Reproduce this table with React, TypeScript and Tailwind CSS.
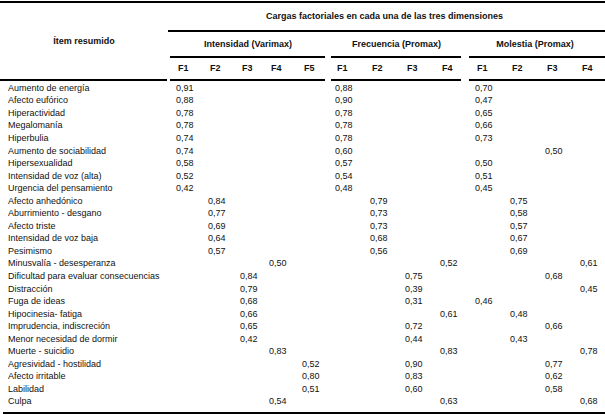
type Cell = [number, string]

interface Row {
  label: string
  cells: Cell[]
}

// column widths of the 13 factor columns (values are left aligned in each)
const colWidths = [32, 32, 29, 33, 33, 35, 35, 35, 35, 35, 35, 35, 25]

const rows: Row[] = [
  { label: 'Aumento de energía', cells: [[1, '0,91'], [6, '0,88'], [10, '0,70']] },
  { label: 'Afecto eufórico', cells: [[1, '0,88'], [6, '0,90'], [10, '0,47']] },
  { label: 'Hiperactividad', cells: [[1, '0,78'], [6, '0,78'], [10, '0,65']] },
  { label: 'Megalomanía', cells: [[1, '0,78'], [6, '0,78'], [10, '0,66']] },
  { label: 'Hiperbulia', cells: [[1, '0,74'], [6, '0,78'], [10, '0,73']] },
  { label: 'Aumento de sociabilidad', cells: [[1, '0,74'], [6, '0,60'], [12, '0,50']] },
  { label: 'Hipersexualidad', cells: [[1, '0,58'], [6, '0,57'], [10, '0,50']] },
  { label: 'Intensidad de voz (alta)', cells: [[1, '0,52'], [6, '0,54'], [10, '0,51']] },
  { label: 'Urgencia del pensamiento', cells: [[1, '0,42'], [6, '0,48'], [10, '0,45']] },
  { label: 'Afecto anhedónico', cells: [[2, '0,84'], [7, '0,79'], [11, '0,75']] },
  { label: 'Aburrimiento - desgano', cells: [[2, '0,77'], [7, '0,73'], [11, '0,58']] },
  { label: 'Afecto triste', cells: [[2, '0,69'], [7, '0,73'], [11, '0,57']] },
  { label: 'Intensidad de voz baja', cells: [[2, '0,64'], [7, '0,68'], [11, '0,67']] },
  { label: 'Pesimismo', cells: [[2, '0,57'], [7, '0,56'], [11, '0,69']] },
  { label: 'Minusvalía - desesperanza', cells: [[4, '0,50'], [9, '0,52'], [13, '0,61']] },
  { label: 'Dificultad para evaluar consecuencias', cells: [[3, '0,84'], [8, '0,75'], [12, '0,68']] },
  { label: 'Distracción', cells: [[3, '0,79'], [8, '0,39'], [13, '0,45']] },
  { label: 'Fuga de ideas', cells: [[3, '0,68'], [8, '0,31'], [10, '0,46']] },
  { label: 'Hipocinesia- fatiga', cells: [[3, '0,66'], [9, '0,61'], [11, '0,48']] },
  { label: 'Imprudencia, indiscreción', cells: [[3, '0,65'], [8, '0,72'], [12, '0,66']] },
  { label: 'Menor necesidad de dormir', cells: [[3, '0,42'], [8, '0,44'], [11, '0,43']] },
  { label: 'Muerte - suicidio', cells: [[4, '0,83'], [9, '0,83'], [13, '0,78']] },
  { label: 'Agresividad - hostilidad', cells: [[5, '0,52'], [8, '0,90'], [12, '0,77']] },
  { label: 'Afecto irritable', cells: [[5, '0,80'], [8, '0,83'], [12, '0,62']] },
  { label: 'Labilidad', cells: [[5, '0,51'], [8, '0,60'], [12, '0,58']] },
  { label: 'Culpa', cells: [[4, '0,54'], [9, '0,63'], [13, '0,68']] },
]

interface GroupProps {
  title: string
  factors: string[]
  widths: number[]
  blockClass: string
  lineClass: string
  padClass: string
}

function Group({ title, factors, widths, blockClass, lineClass, padClass }: GroupProps) {
  return (
    <div className={`flex flex-col ${blockClass}`}>
      <div className="h-[24px] flex items-center justify-center font-bold">{title}</div>
      <div className={`h-[2px] bg-black ${lineClass}`} />
      <div className={`h-[21px] flex items-center font-bold ${padClass}`}>
        {factors.map((f, i) => (
          <div key={f} className="pl-[2px] shrink-0" style={{ width: widths[i] }}>
            {f}
          </div>
        ))}
      </div>
      <div className={`h-[2px] bg-black ${lineClass}`} />
    </div>
  )
}

function TableRow({ row }: { row: Row }) {
  const values: string[] = colWidths.map(() => '')
  row.cells.forEach(([c, v]) => {
    values[c - 1] = v
  })

  return (
    <div className="flex h-[12.56px] items-center">
      <div className="w-[176px] pl-[8px] shrink-0 whitespace-nowrap">{row.label}</div>
      {values.map((v, i) => (
        <div key={i} className="shrink-0" style={{ width: colWidths[i] }}>
          {v}
        </div>
      ))}
    </div>
  )
}

export default function App() {
  return (
    <div className="w-[605px] h-[415px] bg-white text-[9px] leading-none text-[#111] font-['Liberation_Sans',Arial,sans-serif] overflow-hidden">
      <div className="h-[2px] mt-[1px] bg-black" />

      <div className="flex">
        {/* item column header */}
        <div className="w-[168px] shrink-0 flex flex-col">
          <div className="flex-1 flex items-center justify-center font-bold">Ítem resumido</div>
          <div className="h-[2px] bg-black mr-[1px]" />
        </div>

        <div className="flex-1 flex flex-col">
          <div className="h-[27px] flex items-center justify-center font-bold pr-[4px]">
            Cargas factoriales en cada una de las tres dimensiones
          </div>
          <div className="h-[2px] bg-black" />
          <div className="flex">
            <Group
              title="Intensidad (Varimax)"
              factors={['F1', 'F2', 'F3', 'F4', 'F5']}
              widths={[32, 32, 29, 33, 33]}
              blockClass="w-[160px]"
              lineClass="ml-[2px] mr-[3px]"
              padClass="pl-[8px]"
            />
            <Group
              title="Frecuencia (Promax)"
              factors={['F1', 'F2', 'F3', 'F4']}
              widths={[35, 35, 35, 35]}
              blockClass="w-[137px]"
              lineClass="ml-[3px] mr-[4px]"
              padClass="pl-[7px]"
            />
            <Group
              title="Molestia (Promax)"
              factors={['F1', 'F2', 'F3', 'F4']}
              widths={[35, 35, 35, 25]}
              blockClass="w-[140px]"
              lineClass="ml-[4px]"
              padClass="pl-[10px]"
            />
          </div>
        </div>
      </div>

      <div className="pt-[1px]">
        {rows.map((row) => (
          <TableRow key={row.label} row={row} />
        ))}
      </div>

      <div className="h-[2px] mt-[4px] ml-[3px] bg-black" />
    </div>
  )
}
